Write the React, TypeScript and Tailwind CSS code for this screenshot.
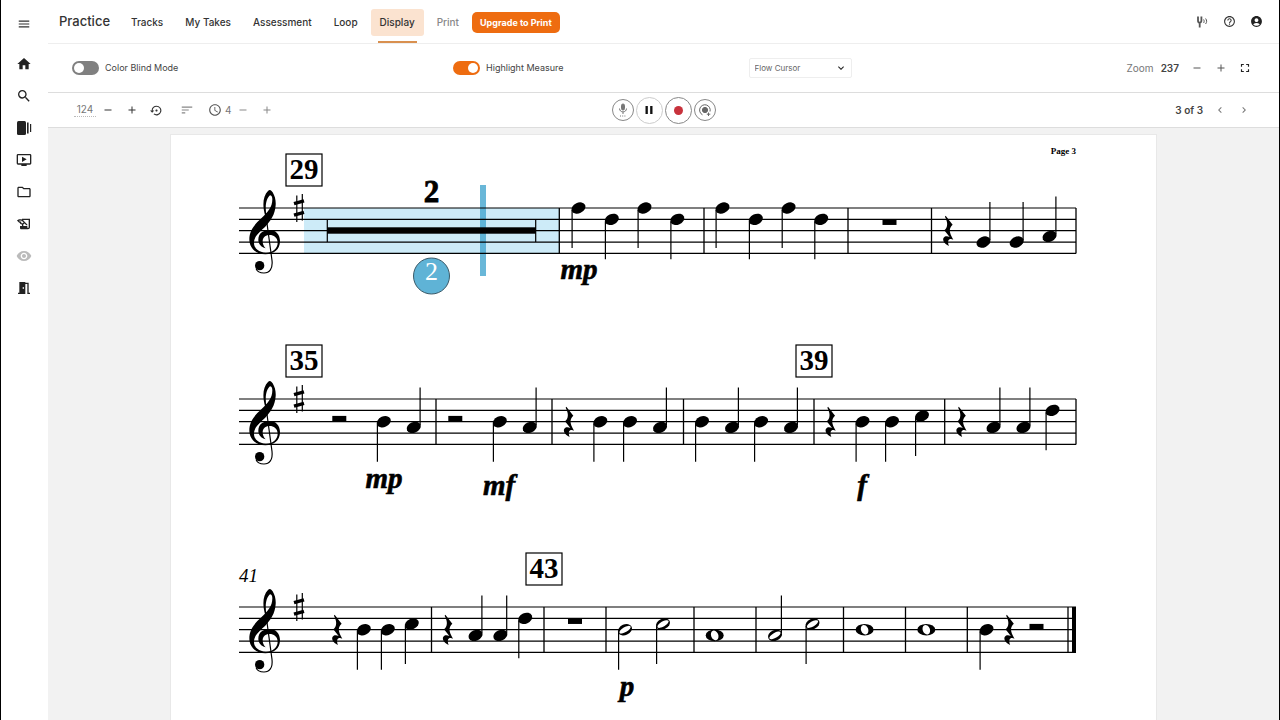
import type { ReactNode } from 'react'
import {
  MdAccessTime,
  MdAccountCircle,
  MdAdd,
  MdChevronLeft,
  MdChevronRight,
  MdExpandMore,
  MdFullscreen,
  MdHelpOutline,
  MdHistoryEdu,
  MdHome,
  MdMeetingRoom,
  MdMenu,
  MdOndemandVideo,
  MdOutlineFolder,
  MdPause,
  MdRemove,
  MdSearch,
  MdSettingsBackupRestore,
  MdSort,
  MdVisibility,
} from 'react-icons/md'

// Distance between two staff lines
const SPACE = 11.35

type Item =
  | { kind: 'bar' | 'quarterRest' | 'halfRest' | 'wholeRest'; x: number }
  | { kind: 'quarter' | 'half' | 'whole'; x: number; step: number; up?: boolean }

const bar = (x: number): Item => ({ kind: 'bar', x })
const rest = (kind: 'quarterRest' | 'halfRest' | 'wholeRest', x: number): Item => ({ kind, x })
// step counts half spaces down from the top line
const quarter = (x: number, step: number, up = false): Item => ({ kind: 'quarter', x, step, up })
const half = (x: number, step: number, up = false): Item => ({ kind: 'half', x, step, up })
const whole = (x: number, step: number): Item => ({ kind: 'whole', x, step })

const firstSystem: Item[] = [
  bar(320.3),
  quarter(339.5, 0), quarter(372.8, 2), quarter(405.5, 0), quarter(438.3, 2),
  bar(465),
  quarter(483.5, 0), quarter(516.8, 2), quarter(549.6, 0), quarter(582.2, 2),
  bar(609),
  rest('wholeRest', 650.5),
  bar(692.5),
  rest('quarterRest', 709.3),
  quarter(744.5, 6, true), quarter(777.7, 6, true), quarter(810.5, 5, true),
  bar(837),
]

const secondSystem: Item[] = [
  rest('halfRest', 100.3), quarter(144.8, 4), quarter(174.7, 5, true),
  bar(197),
  rest('halfRest', 216.3), quarter(260.8, 4), quarter(290.7, 5, true),
  bar(313),
  rest('quarterRest', 330), quarter(361.3, 4), quarter(391, 4), quarter(421, 5, true),
  bar(444.5),
  quarter(463, 4), quarter(493, 5, true), quarter(522, 4), quarter(552, 5, true),
  bar(575),
  rest('quarterRest', 591.7), quarter(623.5, 4), quarter(653, 4), quarter(683, 3),
  bar(705.7),
  rest('quarterRest', 722.5), quarter(754.5, 5, true), quarter(784.5, 5, true), quarter(813.5, 2),
  bar(837),
]

const thirdSystem: Item[] = [
  rest('quarterRest', 98.3), quarter(124.8, 4), quarter(148.8, 4), quarter(172.8, 3),
  bar(192.5),
  rest('quarterRest', 209), quarter(236.5, 5, true), quarter(261.3, 5, true), quarter(286.2, 2),
  bar(305),
  rest('wholeRest', 336),
  bar(367),
  half(386, 4), half(424, 3),
  bar(455),
  whole(475.7, 5),
  bar(517),
  half(536, 5, true), half(573.5, 3),
  bar(604.5),
  whole(625.6, 4),
  bar(666.5),
  whole(687.3, 4),
  bar(728.3),
  quarter(747.5, 4), rest('quarterRest', 770.5), rest('halfRest', 797.5),
  bar(829),
]

function Glyph({ item }: { item: Item }) {
  const { x } = item
  switch (item.kind) {
    case 'bar':
      return <path d={`M${x} 0V${SPACE * 4}`} stroke="#000" strokeWidth="1.3" />
    case 'wholeRest':
      return <rect x={x - 7} y={SPACE} width="14" height="5.6" />
    case 'halfRest':
      return <rect x={x - 7} y={SPACE * 2 - 5.8} width="14" height="5.8" />
    case 'quarterRest':
      return (
        <path
          transform={`translate(${x} 0) scale(0.3333) translate(-325 -83)`}
          d="M317 106L338 133C327 144 326 153 340 178C328 172 320 180 327 197C312 190 304 176 314 169C319 166 325 168 329 170L313 150C323 141 325 128 315 109Z"
        />
      )
    case 'whole':
      return (
        <g transform={`translate(${x} ${(item.step * SPACE) / 2})`}>
          <ellipse rx="9" ry="5.8" />
          <ellipse rx="3.6" ry="4.9" fill="#fff" transform="rotate(-22)" />
        </g>
      )
    default: {
      const y = (item.step * SPACE) / 2
      return (
        <g transform={`translate(${x} ${y})`}>
          <ellipse rx="7.3" ry="5.3" transform="rotate(-24)" />
          {item.kind === 'half' && <ellipse rx="6.4" ry="2.5" fill="#fff" transform="rotate(-30)" />}
          <path d={item.up ? 'M6.4 -2V-40' : 'M-6.4 2V40'} stroke="#000" strokeWidth="1.2" />
        </g>
      )
    }
  }
}

function TrebleClef() {
  return (
    <g transform="scale(0.3333) translate(-26 -188)">
      <path d="M105 213C95 180 98 152 113 137C118 131 123 134 127 141C134 153 137 165 136 180C134 207 122 226 104 245C85 262 71 275 71 292C71 310 86 322 107 322C128 322 142 308 142 292C142 277 130 269 118 269C105 269 97 277 97 288C97 298 101 304 106 309C92 305 84 295 84 283C84 264 98 254 118 254C137 254 149 268 149 288C149 312 131 327 105 327C76 327 57 308 57 282C57 256 72 238 93 219C113 200 126 186 126 162C126 154 123 150 119 150C107 160 103 185 109 212Z" />
      <path d="M106 205L125 345C128 371 117 383 101 383C90 383 80 378 77 370" fill="none" stroke="#000" strokeWidth="3.5" />
      <circle cx="88" cy="361" r="14" />
    </g>
  )
}

function Sharp() {
  return (
    <g stroke="#000">
      <path d="M57.8 -12.5V14M63.3 -14V12.5" strokeWidth="1.2" />
      <path d="M55 -4.4L65 -7.2M55 7.2L65 4.4" strokeWidth="3.4" />
    </g>
  )
}

function Staff({ y, items, children }: { y: number; items: Item[]; children?: ReactNode }) {
  return (
    <g transform={`translate(68 ${y})`}>
      {[0, 1, 2, 3, 4].map((line) => (
        <path key={line} d={`M0 ${line * SPACE}H837`} stroke="#000" strokeWidth="1.2" />
      ))}
      <TrebleClef />
      <Sharp />
      {items.map((item, index) => (
        <Glyph key={index} item={item} />
      ))}
      {children}
    </g>
  )
}

function RehearsalMark({ x, y, children }: { x: number; y: number; children: string }) {
  return (
    <g transform={`translate(${x} ${y})`}>
      <rect x="-18" y="-16" width="36" height="32" fill="#fff" stroke="#000" strokeWidth="1.2" />
      <text y="9" textAnchor="middle" fontSize="29" fontWeight="700">{children}</text>
    </g>
  )
}

function Dynamic({ x, y, children }: { x: number; y: number; children: string }) {
  return (
    <text x={x} y={y} textAnchor="middle" fontSize="29" fontWeight="700" fontStyle="italic" stroke="#000" strokeWidth="0.6">
      {children}
    </text>
  )
}

function Score() {
  return (
    <svg viewBox="0 0 985 650" className="block w-full font-['Liberation_Serif',serif]" aria-label="Sheet music, page 3">
      <text x="905" y="19" textAnchor="end" fontSize="9" fontWeight="700">Page 3</text>

      {/* Highlighted measure and playback cursor */}
      <rect x="133" y="73" width="255" height="46" fill="#cdebf8" />
      <rect x="309" y="50" width="6" height="91" fill="#3fa3cd" opacity="0.78" />
      <Staff y={73} items={firstSystem}>
        <rect x="88" y="19.3" width="209" height="6.4" />
        <path d="M88.3 11.3V34M296.7 11.3V34" stroke="#000" strokeWidth="1.2" />
        <text x="192.5" y="-6" textAnchor="middle" fontSize="31" fontWeight="700" stroke="#000" strokeWidth="0.8">2</text>
      </Staff>
      <RehearsalMark x={133} y={35}>29</RehearsalMark>
      <Dynamic x={408} y={144}>mp</Dynamic>
      <circle cx="260.5" cy="141" r="18" fill="#5fb3d6" stroke="#3c5a68" />
      <text x="260.5" y="145" textAnchor="middle" fontSize="26" fill="#fff">2</text>

      <Staff y={264} items={secondSystem} />
      <RehearsalMark x={133} y={226}>35</RehearsalMark>
      <RehearsalMark x={643} y={226}>39</RehearsalMark>
      <Dynamic x={213} y={353}>mp</Dynamic>
      <Dynamic x={328} y={360}>mf</Dynamic>
      <Dynamic x={691} y={360}>f</Dynamic>

      <Staff y={472} items={thirdSystem}>
        <rect x="833" y="0" width="4" height="46" />
      </Staff>
      <text x="68" y="447" fontSize="19" fontStyle="italic">41</text>
      <RehearsalMark x={373} y={434}>43</RehearsalMark>
      <Dynamic x={456} y={561}>p</Dynamic>
    </svg>
  )
}

function StoriesIcon() {
  return (
    <svg viewBox="0 0 16 16" className="size-4" fill="currentColor" aria-hidden="true">
      <rect x="1" y="1" width="9" height="14" rx="1.5" />
      <rect x="11" y="2.5" width="1.6" height="11" />
      <rect x="14" y="4" width="1.2" height="8" />
    </svg>
  )
}

function TunerIcon() {
  return (
    <svg viewBox="0 0 12 12" className="size-3" fill="none" stroke="currentColor" aria-hidden="true">
      <path d="M2 0.5V4.5C2 7.5 5.4 7.5 5.4 4.5V0.5M3.7 6.5V11.5" strokeWidth="1.8" />
      <path d="M7.6 3.5C8.3 4.5 8.3 6 7.6 7M9.6 2.5C11 4.5 11 6 9.6 8" />
    </svg>
  )
}

function MicIcon() {
  return (
    <svg viewBox="0 0 14 14" className="size-3.5" fill="none" stroke="currentColor" aria-hidden="true">
      <rect x="5.5" y="1" width="3" height="6" rx="1.5" fill="currentColor" />
      <path d="M3.5 5.5C3.5 10 10.5 10 10.5 5.5M7 9V11" />
      <path d="M4 13H10" strokeDasharray="1 1.2" />
    </svg>
  )
}

function LoopRecordIcon() {
  return (
    <svg viewBox="0 0 14 14" className="size-3.5" fill="none" stroke="currentColor" aria-hidden="true">
      <circle cx="7" cy="7" r="2.6" fill="currentColor" />
      <path d="M4.5 11.8A5.3 5.3 0 1 1 12 8.5" />
      <path d="M10.5 9.5V13M8.8 11.2H12.3" />
    </svg>
  )
}

const sidebar = [
  { label: 'Home', icon: <MdHome /> },
  { label: 'Search', icon: <MdSearch /> },
  { label: 'Library', icon: <StoriesIcon /> },
  { label: 'Videos', icon: <MdOndemandVideo /> },
  { label: 'Folders', icon: <MdOutlineFolder /> },
  { label: 'Assignments', icon: <MdHistoryEdu /> },
  { label: 'Preview', icon: <MdVisibility />, muted: true },
  { label: 'Rooms', icon: <MdMeetingRoom /> },
]

const tabs = ['Tracks', 'My Takes', 'Assessment', 'Loop', 'Display', 'Print']

function IconButton({ label, className = 'text-[#555] text-xs', children }: { label: string; className?: string; children: ReactNode }) {
  return (
    <button type="button" aria-label={label} className={`flex h-6 w-6 items-center justify-center ${className}`}>
      {children}
    </button>
  )
}

function Toggle({ label, checked = false }: { label: string; checked?: boolean }) {
  return (
    <label className="flex items-center gap-[6px] text-[9px] text-[#444]">
      <input type="checkbox" defaultChecked={checked} className="peer sr-only" />
      <span className="flex h-[14px] w-[27px] items-center rounded-full bg-[#808080] px-[2px] peer-checked:justify-end peer-checked:bg-[#ee6c10]">
        <span className="size-[10px] rounded-full bg-white" />
      </span>
      {label}
    </label>
  )
}

export default function App() {
  return (
    <div className="flex h-screen overflow-hidden border-x border-black bg-white font-['Inter',sans-serif] text-[#333]">
      {/* Sidebar */}
      <aside className="flex w-[47px] shrink-0 flex-col items-center pt-3 pr-0.5">
        <IconButton label="Menu" className="text-sm text-[#333]"><MdMenu /></IconButton>
        <nav className="mt-4 flex flex-col gap-2">
          {sidebar.map((entry) => (
            <a
              key={entry.label}
              href="#"
              aria-label={entry.label}
              className={`flex h-6 w-6 items-center justify-center text-base ${entry.muted ? 'text-[#bbb]' : 'text-[#222]'}`}
            >
              {entry.icon}
            </a>
          ))}
        </nav>
      </aside>

      <div className="flex min-w-0 flex-1 flex-col">
        {/* Header */}
        <header className="flex h-[44px] shrink-0 items-center border-b border-[#eee] pr-[11px] pl-[11px]">
          <h1 className="mr-3 text-[13px] font-medium">Practice</h1>
          <nav className="flex h-full items-center gap-1 pt-0.5 text-[10px] font-medium">
            {tabs.map((tab) => (
              <a key={tab} href="#" className={`relative flex h-[27px] items-center rounded-[3px] px-[9px] whitespace-nowrap ${tab === 'Display' ? 'bg-[#fbe3d0]' : ''} ${tab === 'Print' ? 'text-[#888]' : ''}`}>
                {tab}
                {tab === 'Display' && <span className="absolute inset-x-[7px] -bottom-[7px] h-[2px] bg-[#d9904f]" />}
              </a>
            ))}
          </nav>
          <button type="button" className="mt-0.5 ml-1 h-[21px] rounded-[5px] bg-[#ee6c10] px-2 text-[9px] font-bold whitespace-nowrap text-white">
            Upgrade to Print
          </button>
          <div className="ml-auto flex gap-[3px]">
            <IconButton label="Tuner"><TunerIcon /></IconButton>
            <IconButton label="Help" className="text-[13px] text-[#333]"><MdHelpOutline /></IconButton>
            <IconButton label="Account" className="text-[13px] text-[#222]"><MdAccountCircle /></IconButton>
          </div>
        </header>

        {/* Display options */}
        <section className="grid h-[49px] shrink-0 grid-cols-[383fr_297fr_380fr_auto] items-center border-b border-[#ddd] pr-[22px] pl-6">
          <Toggle label="Color Blind Mode" />
          <Toggle label="Highlight Measure" checked />
          <div className="relative w-[103px]">
            <select aria-label="Cursor" className="block h-5 w-full appearance-none rounded-[2px] border border-[#eee] bg-white px-[5px] text-[8px] text-[#666]">
              <option>Flow Cursor</option>
            </select>
            <MdExpandMore className="pointer-events-none absolute top-1 right-[5px] text-xs text-[#222]" />
          </div>
          <div className="flex items-center text-[10px]">
            <span className="mr-[7px] text-[#777]">Zoom</span>
            <span className="mr-[6px] font-semibold text-[#444]">237</span>
            <IconButton label="Zoom out"><MdRemove /></IconButton>
            <IconButton label="Zoom in"><MdAdd /></IconButton>
            <IconButton label="Fullscreen" className="text-sm text-[#222]"><MdFullscreen /></IconButton>
          </div>
        </section>

        {/* Transport */}
        <section className="grid h-[35px] shrink-0 grid-cols-[1fr_auto_1fr] items-center border-b border-[#ddd]">
          <div className="flex items-center pl-[26px] text-[10px] text-[#777]">
            <input aria-label="Tempo" defaultValue="124" className="h-[14px] w-[22px] border-b border-dotted border-[#bbb] text-center" />
            <IconButton label="Slower" className="text-xs text-[#333]"><MdRemove /></IconButton>
            <IconButton label="Faster" className="text-xs text-[#333]"><MdAdd /></IconButton>
            <IconButton label="Reset tempo" className="text-[13px] text-[#333]"><MdSettingsBackupRestore /></IconButton>
            <IconButton label="Count-in" className="ml-[7px] text-sm text-[#888]"><MdSort /></IconButton>
            <MdAccessTime className="ml-[9px] text-sm text-[#555]" aria-hidden="true" />
            <span className="ml-[3px]">4</span>
            <IconButton label="Fewer beats" className="text-xs text-[#888]"><MdRemove /></IconButton>
            <IconButton label="More beats" className="text-xs text-[#888]"><MdAdd /></IconButton>
          </div>
          <div className="flex items-center gap-0.5">
            <button type="button" aria-label="Microphone" className="flex size-[22px] items-center justify-center rounded-full border border-[#888] text-[#777]">
              <MicIcon />
            </button>
            <button type="button" aria-label="Pause" className="flex size-[27px] items-center justify-center rounded-full border border-[#ccc] text-sm text-[#111]">
              <MdPause />
            </button>
            <button type="button" aria-label="Record" className="flex size-[27px] items-center justify-center rounded-full border border-[#888]">
              <span className="size-[9px] rounded-full bg-[#c8323c]" />
            </button>
            <button type="button" aria-label="Loop record" className="flex size-[22px] items-center justify-center rounded-full border border-[#888] text-[#666]">
              <LoopRecordIcon />
            </button>
          </div>
          <div className="flex items-center justify-end pr-[23px] text-[10px]">
            <span className="mr-[5px] font-semibold text-[#444]">3 of 3</span>
            <IconButton label="Previous page" className="text-xs text-[#777]"><MdChevronLeft /></IconButton>
            <IconButton label="Next page" className="text-xs text-[#777]"><MdChevronRight /></IconButton>
          </div>
        </section>

        <main className="min-h-0 flex-1 overflow-hidden bg-[#f2f2f2] pt-[7px]">
          <div className="mx-auto w-full max-w-[985px] bg-white outline outline-[#e8e8e8]">
            <Score />
          </div>
        </main>
      </div>
    </div>
  )
}
